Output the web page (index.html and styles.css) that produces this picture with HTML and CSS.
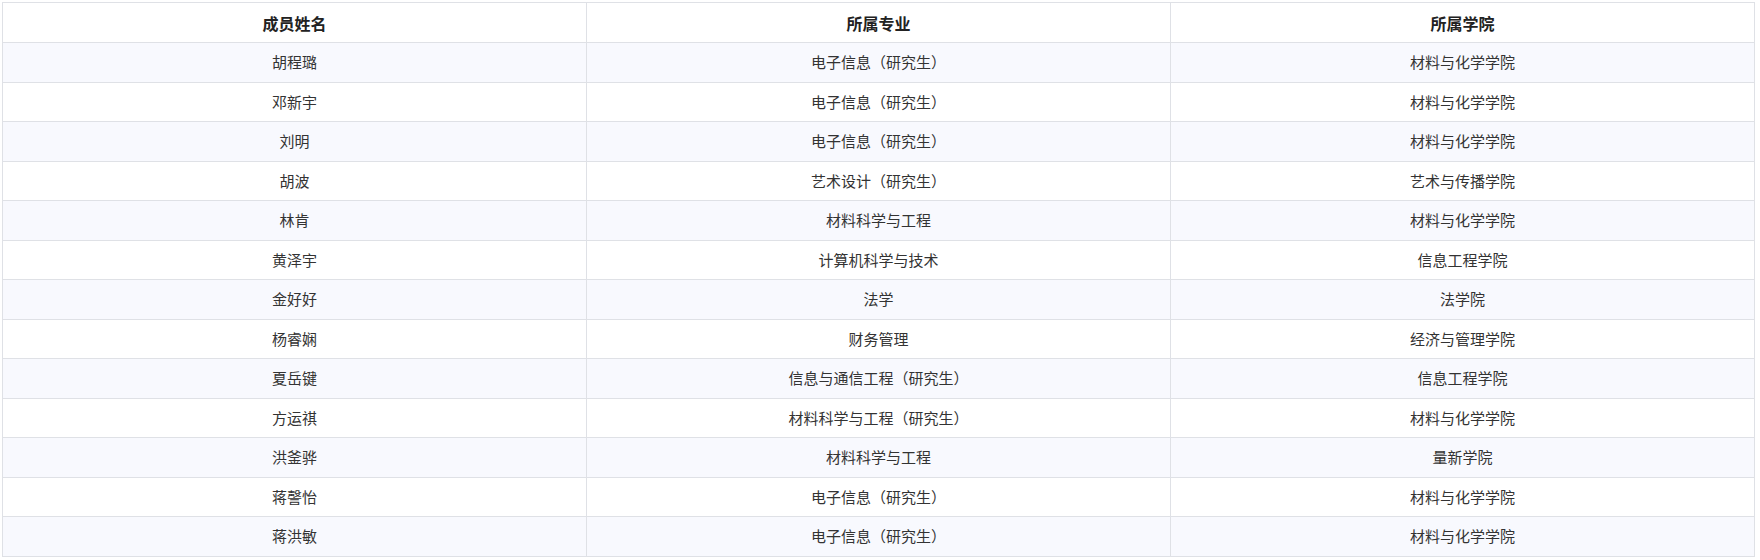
FILE: index.html
```html
<!DOCTYPE html>
<html lang="zh-CN">
   <head>
      <meta charset="UTF-8">
      <meta name="viewport" content="width=device-width, initial-scale=1.0">
      <link rel="stylesheet" href="styles.css">
      <title>成员列表</title>
   </head>
   <body>
      <table class="members">
         <thead>
            <tr>
               <th>成员姓名</th>
               <th>所属专业</th>
               <th>所属学院</th>
            </tr>
         </thead>
         <tbody>
            <tr><td>胡程璐</td><td>电子信息（研究生）</td><td>材料与化学学院</td></tr>
            <tr><td>邓新宇</td><td>电子信息（研究生）</td><td>材料与化学学院</td></tr>
            <tr><td>刘明</td><td>电子信息（研究生）</td><td>材料与化学学院</td></tr>
            <tr><td>胡波</td><td>艺术设计（研究生）</td><td>艺术与传播学院</td></tr>
            <tr><td>林肯</td><td>材料科学与工程</td><td>材料与化学学院</td></tr>
            <tr><td>黄泽宇</td><td>计算机科学与技术</td><td>信息工程学院</td></tr>
            <tr><td>金好好</td><td>法学</td><td>法学院</td></tr>
            <tr><td>杨睿娴</td><td>财务管理</td><td>经济与管理学院</td></tr>
            <tr><td>夏岳键</td><td>信息与通信工程（研究生）</td><td>信息工程学院</td></tr>
            <tr><td>方运祺</td><td>材料科学与工程（研究生）</td><td>材料与化学学院</td></tr>
            <tr><td>洪釜骅</td><td>材料科学与工程</td><td>量新学院</td></tr>
            <tr><td>蒋謦怡</td><td>电子信息（研究生）</td><td>材料与化学学院</td></tr>
            <tr><td>蒋洪敏</td><td>电子信息（研究生）</td><td>材料与化学学院</td></tr>
         </tbody>
      </table>
   </body>
</html>
```

FILE: styles.css
```css
body {
margin: 0;
padding: 2px 5px 0 2px;
font-family: "Noto Sans CJK SC", "Microsoft YaHei", sans-serif;
color: #333;
background-color: #fff;
}
.members {
width: 100%;
border-collapse: collapse;
table-layout: fixed;
border: 1px solid #dfe1e6;
}
.members th,
.members td {
border: 1px solid #dfe1e6;
text-align: center;
padding: 0;
line-height: 20px;
}
.members th {
height: 39px;
font-size: 16px;
font-weight: bold;
color: #222;
}
.members td {
height: 38.5px;
font-size: 15px;
}
/* 隔行底色 */
.members tbody tr:nth-child(odd) {
background-color: #f8f9fe;
}
```
